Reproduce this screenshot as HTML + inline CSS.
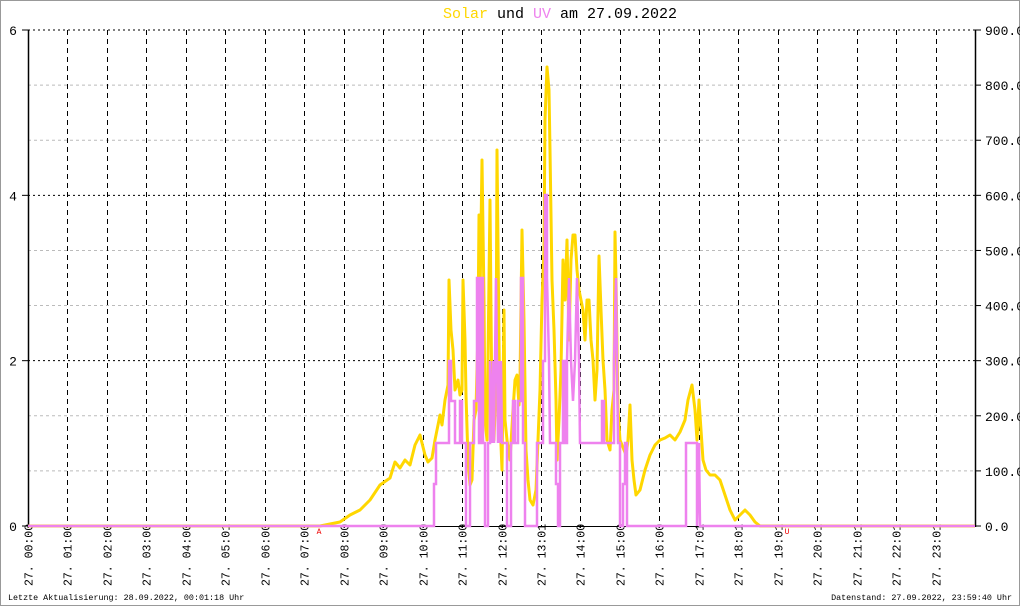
<!DOCTYPE html>
<html><head><meta charset="utf-8"><style>
html,body{margin:0;padding:0;background:#fff}
svg{display:block}
text{font-family:"Liberation Mono","DejaVu Sans Mono",monospace}
</style></head><body>
<svg id="s" width="1020" height="606" viewBox="0 0 1020 606" xmlns="http://www.w3.org/2000/svg">
<rect x="0.5" y="0.5" width="1019" height="605" fill="#fff" stroke="#999" stroke-width="1"/>
<text x="560" y="18" font-size="15" text-anchor="middle"><tspan fill="#ffd700">Solar</tspan> und <tspan fill="#ee82ee">UV</tspan> am 27.09.2022</text>
<g id="grid"></g>
<polyline fill="none" stroke="#ffd700" stroke-width="3" stroke-linejoin="round" points="28,526 320,526 340,522 350,515 360,510 370,500 380,485 390,478 395,462 400,468 405,460 410,465 415,445 420,435 425,455 428,462 432,458 435,440 440,415 442,425 445,400 448,385 449,280 451,330 453,350 455,390 458,380 460,395 462,390 463,280 465,340 466,395 468,460 470,485 472,480 474,420 476,410 478,330 479,215 480,300 482,160 484,300 485,420 487,440 488,360 490,200 492,420 494,440 496,380 497,150 499,340 500,420 502,470 504,310 505,420 507,440 510,460 513,410 515,380 517,375 519,405 520,380 522,230 524,320 526,450 528,480 530,500 533,505 536,490 538,440 540,390 542,300 544,250 545,120 547,67 549,90 550,150 552,280 554,330 556,400 557,460 559,420 561,370 563,260 565,300 567,240 569,340 571,260 573,235 575,235 577,270 579,290 581,300 583,310 585,340 587,300 589,300 591,340 593,360 595,400 597,370 599,256 601,310 603,360 605,390 607,440 610,450 612,410 614,390 615,232 616,280 618,410 620,440 622,445 624,450 626,455 628,440 630,405 632,460 634,480 636,495 640,490 645,470 650,455 655,445 660,440 665,438 670,435 675,440 680,432 685,420 688,400 692,385 695,410 697,440 699,400 701,430 703,460 706,470 710,475 715,475 720,480 725,495 730,510 735,520 740,515 745,510 750,515 755,522 760,526 975,526"/>
<polyline fill="none" stroke="#ee82ee" stroke-width="2.5" points="28,526 434,526 434,484 436,484 436,443 449,443 449,361 451,361 451,401 455,401 455,443 460,443 460,401 462,401 462,443 466,443 466,526 470,526 470,443 474,443 474,401 477,401 477,278 479,278 479,443 481,443 481,278 483,278 483,443 485,443 485,526 488,526 488,443 490,443 490,361 492,443 493,361 494,443 495,361 496,278 497,361 498,443 499,361 500,443 501,361 502,443 507,443 507,526 511,526 511,443 513,443 513,401 515,401 515,443 518,443 518,401 521,401 521,278 523,278 523,443 525,443 525,526 537,526 537,443 543,443 543,361 545,361 545,195 547,195 547,278 549,361 550,443 556,443 556,484 558,484 558,526 560,526 560,443 563,443 563,361 565,361 565,443 567,443 567,361 569,278 571,361 573,401 575,361 577,278 579,361 580,443 584,443 584,443 590,443 590,443 593,443 593,443 602,443 602,401 604,401 604,443 607,443 607,443 614,443 614,361 616,278 618,443 620,443 620,526 623,526 623,484 625,484 625,443 627,443 627,526 635,526 686,526 686,443 697,443 697,526 699,443 700,526 975,526"/>
<text x="319" y="534" font-size="8" fill="#e00" text-anchor="middle">A</text>
<text x="787" y="534" font-size="8" fill="#e00" text-anchor="middle">U</text>
<text x="8" y="600" font-size="8.4">Letzte Aktualisierung: 28.09.2022, 00:01:18 Uhr</text>
<text x="1012" y="600" font-size="8.4" text-anchor="end">Datenstand: 27.09.2022, 23:59:40 Uhr</text>
</svg>
<script>
var NS="http://www.w3.org/2000/svg",g=document.getElementById("grid");
function el(t,a,txt){var e=document.createElementNS(NS,t);for(var k in a)e.setAttribute(k,a[k]);if(txt!=null)e.textContent=txt;g.appendChild(e);return e;}
for(var i=0;i<=9;i++){var y=526-i*55.11;
 if(i>0){var dark=(i%3==0);el("line",{x1:28,x2:975,y1:y,y2:y,stroke:dark?"#000":"#bbb","stroke-width":1,"stroke-dasharray":dark?"2,3":"3,3"});}
 el("line",{x1:975,x2:981,y1:y,y2:y,stroke:"#000"});
 el("text",{x:985,y:y+5,"font-size":13},(i*100).toFixed(1));
}
for(var j=0;j<=3;j++){var y=526-j*165.33;el("line",{x1:22,x2:28,y1:y,y2:y,stroke:"#000"});el("text",{x:13,y:y+5,"font-size":13,"text-anchor":"middle"},String(j*2));}
var labs=["00:00","01:00","02:00","03:00","04:00","05:01","06:00","07:00","08:00","09:00","10:00","11:00","12:00","13:01","14:00","15:00","16:00","17:01","18:01","19:01","20:01","21:01","22:01","23:01"];
for(var h=0;h<24;h++){var x=Math.round(28+39.46*h)+0.5;
 if(h>0)el("line",{x1:x,x2:x,y1:30,y2:526,stroke:"#000","stroke-dasharray":"5,4"});
 el("text",{x:0,y:0,"font-size":11.5,transform:"translate("+(x+4)+",586) rotate(-90)"},"27. "+labs[h]);
}
el("line",{x1:28.5,x2:28.5,y1:30,y2:527,stroke:"#000","stroke-width":1.5});
el("line",{x1:975.5,x2:975.5,y1:30,y2:527,stroke:"#000","stroke-width":1.5});
el("line",{x1:28,x2:976,y1:526.5,y2:526.5,stroke:"#000","stroke-width":1});
</script>
</body></html>
